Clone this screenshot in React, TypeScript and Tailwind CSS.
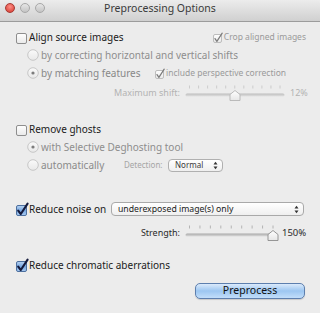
import React from "react";

function Box({ checked = false, small = false, dim = false }: { checked?: boolean; small?: boolean; dim?: boolean }) {
  const s = small ? 8 : 10;
  const W = s + 4;
  return (
    <svg width={W} height={W} viewBox={`0 0 ${W} ${W}`} className="shrink-0 overflow-visible">
      <defs>
        <linearGradient id="boxw" x1="0" y1="0" x2="0" y2="1">
          <stop offset="0" stopColor="#ffffff" />
          <stop offset="1" stopColor="#e9e9e9" />
        </linearGradient>
        <linearGradient id="boxb" x1="0" y1="0" x2="0" y2="1">
          <stop offset="0" stopColor="#b9d4f3" />
          <stop offset="0.5" stopColor="#78a8e2" />
          <stop offset="1" stopColor="#a9cbf2" />
        </linearGradient>
      </defs>
      <rect
        x={0.5}
        y={3.5}
        width={s}
        height={s}
        rx={1.5}
        fill={checked && !small ? "url(#boxb)" : "url(#boxw)"}
        stroke={dim ? "#bdbdbd" : checked && !small ? "#4d6f9e" : "#8e8e8e"}
      />
      {checked && !small && (
        <path d="M2.2 8.6 L4.8 12 L11.6 1.6" fill="none" stroke="#141a3c" strokeWidth={2.1} strokeLinecap="round" strokeLinejoin="round" />
      )}
      {checked && small && (
        <path d="M2 7.6 L3.9 10.4 L9.2 2.2" fill="none" stroke="#7a7a7a" strokeWidth={1.2} strokeLinecap="round" strokeLinejoin="round" />
      )}
    </svg>
  );
}

function Radio({ on = false }: { on?: boolean }) {
  return (
    <svg width={12} height={12} viewBox="0 0 12 12" className="shrink-0">
      <defs>
        <linearGradient id="rad" x1="0" y1="0" x2="0" y2="1">
          <stop offset="0" stopColor="#fafafa" />
          <stop offset="1" stopColor="#e8e8e8" />
        </linearGradient>
      </defs>
      <circle cx={6} cy={6} r={5.3} fill="url(#rad)" stroke="#c2c2c2" strokeWidth={0.9} />
      {on && <circle cx={6} cy={6} r={1.6} fill="#7c7c7c" />}
    </svg>
  );
}

function Slider({ width, ticks, first, last, thumb, trackEnd, dim }: { width: number; ticks: number; first: number; last: number; thumb: number; trackEnd: number; dim?: boolean }) {
  const xs = Array.from({ length: ticks }, (_, i) => first + ((last - first) * i) / (ticks - 1));
  const tx = thumb;
  return (
    <svg width={width} height={18} viewBox={`0 0 ${width} 18`} className="shrink-0">
      <defs>
        <linearGradient id="trk" x1="0" y1="0" x2="0" y2="1">
          <stop offset="0" stopColor="#a9a9a9" />
          <stop offset="1" stopColor="#dcdcdc" />
        </linearGradient>
        <linearGradient id="thm" x1="0" y1="0" x2="0" y2="1">
          <stop offset="0" stopColor="#ffffff" />
          <stop offset="1" stopColor="#e6e6e6" />
        </linearGradient>
      </defs>
      {xs.map((x, i) => (
        <line key={i} x1={x} x2={x} y1={1.5} y2={4.5} stroke={dim ? "#c4c4c4" : "#a6a6a6"} strokeWidth={0.8} />
      ))}
      <rect x={0.5} y={9.5} width={trackEnd - 1} height={3} rx={1.5} fill="url(#trk)" opacity={dim ? 0.7 : 1} />
      <path
        d={`M${tx} 6.5 L${tx + 5} 10.5 L${tx + 5} 16.5 L${tx - 5} 16.5 L${tx - 5} 10.5 Z`}
        fill="url(#thm)"
        stroke={dim ? "#b4b4b4" : "#8c8c8c"}
        strokeWidth={0.9}
        strokeLinejoin="round"
      />
    </svg>
  );
}

function Popup({ w, h, label, small }: { w: number; h: number; label: string; small?: boolean }) {
  return (
    <div
      className={
        small
          ? "flex items-center justify-between rounded-[4px] border border-[#b0b0b0] bg-gradient-to-b from-[#ffffff] to-[#efefef] pl-[6px] pr-[4px] text-[#3a3a3a] text-[8px]"
          : "flex items-center justify-between rounded-[4px] border border-[#a9a9a9] bg-gradient-to-b from-[#ffffff] to-[#efefef] pl-[6px] pr-[4px] text-[#222] text-[8.7px]"
      }
      style={{ width: w, height: h }}
    >
      <span className="leading-none">{label}</span>
      <svg width={5} height={9} viewBox="0 0 5 9">
        <path d="M0.5 3.5 L2.5 0.8 L4.5 3.5 Z" fill="#333" />
        <path d="M0.5 5.5 L2.5 8.2 L4.5 5.5 Z" fill="#333" />
      </svg>
    </div>
  );
}

export default function App() {
  return (
    <div className="w-[320px] h-[313px] bg-[#ececec] flex flex-col overflow-hidden font-['Noto_Sans',sans-serif] text-[10px] text-[#1b1b1b]">
      {/* title bar */}
      <div className="h-[22px] shrink-0 flex items-center relative bg-gradient-to-b from-[#ececec] to-[#d0d0d0] border-b border-[#9c9c9c] rounded-t-[4px]">
        <div className="flex items-center gap-[5px] pl-[5px] -mt-[6px]">
          <div className="w-[10px] h-[10px] rounded-full bg-[radial-gradient(circle_at_50%_35%,#ff8f86,#d3352b)] border border-[#a63a33]" />
          <div className="w-[10px] h-[10px] rounded-full bg-gradient-to-b from-[#e6e6e6] to-[#c4c4c4] border border-[#a7a7a7]" />
          <div className="w-[10px] h-[10px] rounded-full bg-gradient-to-b from-[#e6e6e6] to-[#c4c4c4] border border-[#a7a7a7]" />
        </div>
        <div className="absolute left-0 right-0 top-0 h-[17px] flex items-center justify-center text-[10.5px] text-[#3a3a3a]">
          Preprocessing Options
        </div>
      </div>

      <div className="flex flex-col pt-[6px]">
        {/* Align */}
        <div className="h-[18px] flex items-center pl-[16px] pr-[14px]">
          <Box />
          <span className="ml-[-1px]">Align source images</span>
          <div className="ml-auto flex items-center text-[8.5px] text-[#9a9a9a]">
            <Box small checked dim />
            <span className="ml-[-1px]">Crop aligned images</span>
          </div>
        </div>
        <div className="h-[18px] flex items-center pl-[27px] text-[#8e8e8e]">
          <Radio />
          <span className="ml-[2px]">by correcting horizontal and vertical shifts</span>
        </div>
        <div className="h-[18px] flex items-center pl-[27px] text-[#888]">
          <Radio on />
          <span className="ml-[2px] w-[114px]">by matching features</span>
          <Box small checked dim />
          <span className="ml-[-1px] text-[8.5px] text-[#9a9a9a]">include perspective correction</span>
        </div>
        <div className="h-[18px] mt-[2px] flex items-center text-[#b3b3b3]">
          <span className="w-[180px] text-right text-[9px]">Maximum shift:</span>
          <div className="ml-[5px]">
            <Slider width={100} ticks={11} first={4.5} last={95} thumb={50} trackEnd={100} dim />
          </div>
          <span className="ml-[5px] text-[9px]">12%</span>
        </div>

        {/* ghosts */}
        <div className="h-[18px] mt-[18px] flex items-center pl-[16px]">
          <Box />
          <span className="ml-[-1px]">Remove ghosts</span>
        </div>
        <div className="h-[18px] flex items-center pl-[27px] text-[#8e8e8e]">
          <Radio on />
          <span className="ml-[2px]">with Selective Deghosting tool</span>
        </div>
        <div className="h-[18px] flex items-center pl-[27px] text-[#8a8a8a]">
          <Radio />
          <span className="ml-[2px] w-[83px]">automatically</span>
          <span className="w-[44px] text-[8px] text-[#a5a5a5]">Detection:</span>
          <Popup w={55} h={13} label="Normal" small />
        </div>

        {/* noise */}
        <div className="h-[18px] mt-[26px] flex items-center pl-[16px]">
          <Box checked />
          <span className="ml-[-1px] w-[82px]">Reduce noise on</span>
          <Popup w={193} h={14} label="underexposed image(s) only" />
        </div>
        <div className="h-[18px] mt-[6px] flex items-center text-[#2a2a2a]">
          <span className="w-[180px] text-right text-[9px]">Strength:</span>
          <div className="ml-[5px]">
            <Slider width={94} ticks={9} first={4.5} last={88} thumb={88} trackEnd={92} />
          </div>
          <span className="ml-[3px] text-[9.5px]">150%</span>
        </div>

        {/* chromatic */}
        <div className="h-[18px] mt-[14px] flex items-center pl-[16px]">
          <Box checked />
          <span className="ml-[-1px]">Reduce chromatic aberrations</span>
        </div>

        {/* button */}
        <div className="mt-[9px] pl-[195px]">
          <div className="w-[110px] h-[16px] rounded-[5px] border border-[#5d7fae] bg-gradient-to-b from-[#dbeafb] via-[#9cc6f1] to-[#c2defa] flex items-center justify-center text-[10.5px] text-[#111] shadow-[0_1px_1px_rgba(0,0,0,0.15)]">
            Preprocess
          </div>
        </div>
      </div>
    </div>
  );
}
